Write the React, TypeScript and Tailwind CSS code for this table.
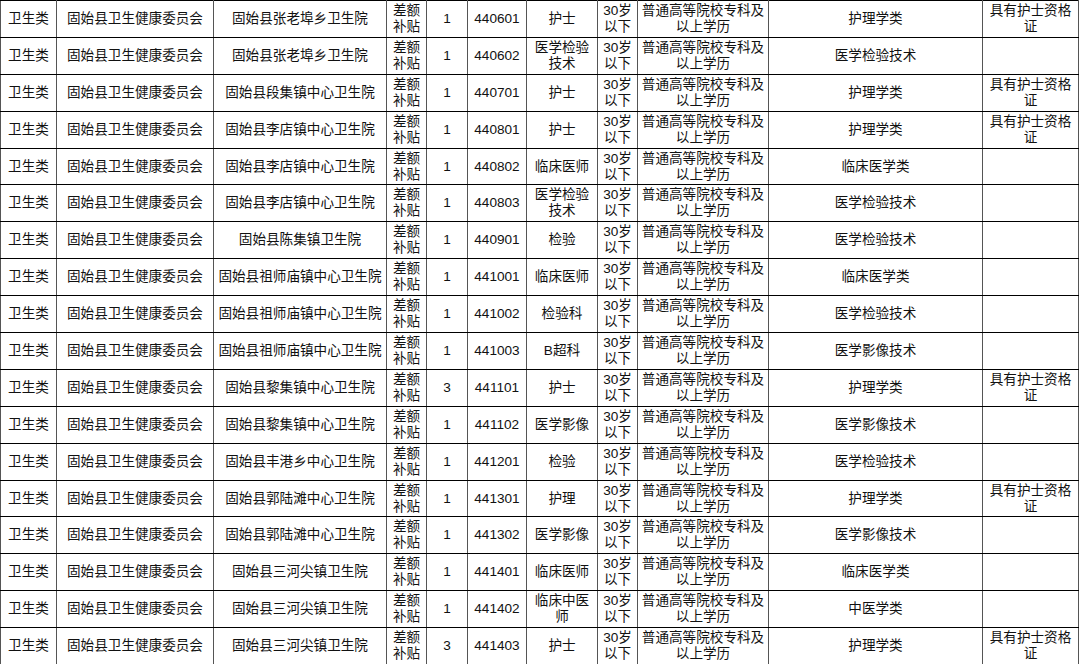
import React from "react";

type Row = {
    unit: string;
    hospital: string;
    count: string;
    code: string;
    post: string;
    major: string;
    note: string;
};

const NURSE_NOTE = "具有护士资格\n证";

const rows: Row[] = [
    { unit: "固始县卫生健康委员会", hospital: "固始县张老埠乡卫生院", count: "1", code: "440601", post: "护士", major: "护理学类", note: NURSE_NOTE },
    { unit: "固始县卫生健康委员会", hospital: "固始县张老埠乡卫生院", count: "1", code: "440602", post: "医学检验\n技术", major: "医学检验技术", note: "" },
    { unit: "固始县卫生健康委员会", hospital: "固始县段集镇中心卫生院", count: "1", code: "440701", post: "护士", major: "护理学类", note: NURSE_NOTE },
    { unit: "固始县卫生健康委员会", hospital: "固始县李店镇中心卫生院", count: "1", code: "440801", post: "护士", major: "护理学类", note: NURSE_NOTE },
    { unit: "固始县卫生健康委员会", hospital: "固始县李店镇中心卫生院", count: "1", code: "440802", post: "临床医师", major: "临床医学类", note: "" },
    { unit: "固始县卫生健康委员会", hospital: "固始县李店镇中心卫生院", count: "1", code: "440803", post: "医学检验\n技术", major: "医学检验技术", note: "" },
    { unit: "固始县卫生健康委员会", hospital: "固始县陈集镇卫生院", count: "1", code: "440901", post: "检验", major: "医学检验技术", note: "" },
    { unit: "固始县卫生健康委员会", hospital: "固始县祖师庙镇中心卫生院", count: "1", code: "441001", post: "临床医师", major: "临床医学类", note: "" },
    { unit: "固始县卫生健康委员会", hospital: "固始县祖师庙镇中心卫生院", count: "1", code: "441002", post: "检验科", major: "医学检验技术", note: "" },
    { unit: "固始县卫生健康委员会", hospital: "固始县祖师庙镇中心卫生院", count: "1", code: "441003", post: "B超科", major: "医学影像技术", note: "" },
    { unit: "固始县卫生健康委员会", hospital: "固始县黎集镇中心卫生院", count: "3", code: "441101", post: "护士", major: "护理学类", note: NURSE_NOTE },
    { unit: "固始县卫生健康委员会", hospital: "固始县黎集镇中心卫生院", count: "1", code: "441102", post: "医学影像", major: "医学影像技术", note: "" },
    { unit: "固始县卫生健康委员会", hospital: "固始县丰港乡中心卫生院", count: "1", code: "441201", post: "检验", major: "医学检验技术", note: "" },
    { unit: "固始县卫生健康委员会", hospital: "固始县郭陆滩中心卫生院", count: "1", code: "441301", post: "护理", major: "护理学类", note: NURSE_NOTE },
    { unit: "固始县卫生健康委员会", hospital: "固始县郭陆滩中心卫生院", count: "1", code: "441302", post: "医学影像", major: "医学影像技术", note: "" },
    { unit: "固始县卫生健康委员会", hospital: "固始县三河尖镇卫生院", count: "1", code: "441401", post: "临床医师", major: "临床医学类", note: "" },
    { unit: "固始县卫生健康委员会", hospital: "固始县三河尖镇卫生院", count: "1", code: "441402", post: "临床中医\n师", major: "中医学类", note: "" },
    { unit: "固始县卫生健康委员会", hospital: "固始县三河尖镇卫生院", count: "3", code: "441403", post: "护士", major: "护理学类", note: NURSE_NOTE },
];

// widths taken from the grid lines of the sheet
const colWidths = [56, 157, 173, 40, 41, 59, 71, 40, 131, 214, 96];

const cell =
    "border-x border-x-[#555] border-y border-y-black p-0 text-center align-middle whitespace-pre-line";

export default function App() {
    return (
        <div className="h-[664px] w-[1080px] overflow-hidden bg-white text-[#111]">
            <table
                className="table-fixed border-collapse text-[13.6px] leading-[16px]"
                style={{ fontFamily: '"Liberation Sans", "Noto Sans CJK SC", sans-serif' }}
            >
                <colgroup>
                    {colWidths.map((w, i) => (
                        <col key={i} style={{ width: w }} />
                    ))}
                </colgroup>
                <tbody>
                    {rows.map((r) => (
                        <tr key={r.code} className="h-[36.9px]">
                            <td className={cell}>卫生类</td>
                            <td className={cell}>{r.unit}</td>
                            <td className={`${cell} whitespace-nowrap`}>{r.hospital}</td>
                            <td className={cell}>{"差额\n补贴"}</td>
                            <td className={cell}>{r.count}</td>
                            <td className={cell}>{r.code}</td>
                            <td className={cell}>{r.post}</td>
                            <td className={cell}>{"30岁\n以下"}</td>
                            <td className={cell}>{"普通高等院校专科及\n以上学历"}</td>
                            <td className={cell}>{r.major}</td>
                            <td className={cell}>{r.note}</td>
                        </tr>
                    ))}
                </tbody>
            </table>
        </div>
    );
}
